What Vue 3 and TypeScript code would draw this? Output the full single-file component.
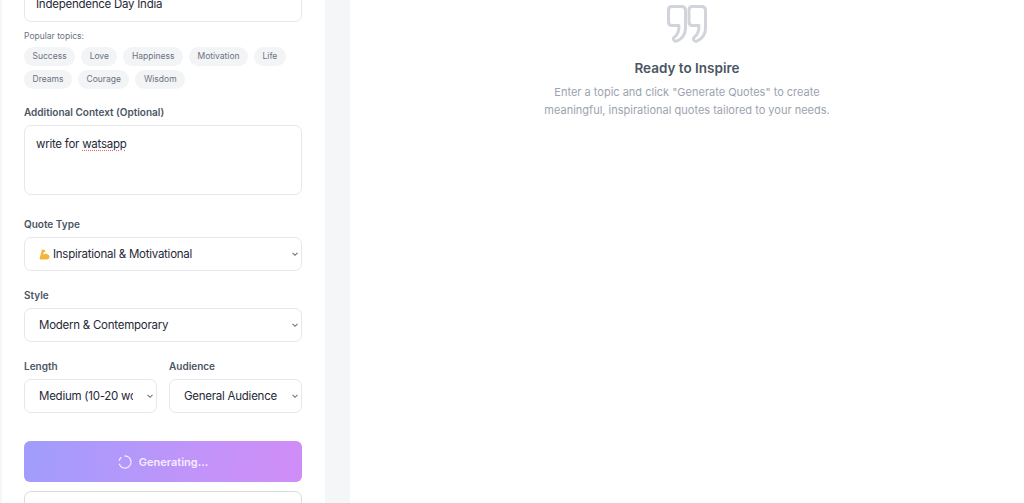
<script setup lang="ts">
const rowOne = ['Success', 'Love', 'Happiness', 'Motivation', 'Life']
const rowTwo = ['Dreams', 'Courage', 'Wisdom']
</script>

<template>
  <div class="page">
    <aside class="panel">
      <div class="form">
        <div class="input">Independence Day India</div>
        <p class="hint">Popular topics:</p>
        <div class="chips">
          <span v-for="topic in rowOne" :key="topic" class="chip">{{ topic }}</span>
        </div>
        <div class="chips second">
          <span v-for="topic in rowTwo" :key="topic" class="chip">{{ topic }}</span>
        </div>

        <label class="label context">Additional Context (Optional)</label>
        <div class="textarea">write for <span class="typo">watsapp</span></div>

        <label class="label type">Quote Type</label>
        <div class="select">
          <span class="value">
            <svg class="flex-icon" viewBox="0 0 12 12" aria-hidden="true">
              <path d="M3.200 0.500 6.500 1 7 3 5.200 3.500 4.600 6.200C6.200 4.600 9 4.600 11 6.800 12.200 9 11 11.200 9 11.500L1.500 11.500C0.500 11 0.500 10 1 9Z" fill="#f4b63a" />
            </svg>
            Inspirational &amp; Motivational
          </span>
          <svg class="chevron" viewBox="0 0 10 10" aria-hidden="true"><path d="M2.500 3.800 5 6.300 7.500 3.800" /></svg>
        </div>

        <label class="label">Style</label>
        <div class="select">
          <span class="value">Modern &amp; Contemporary</span>
          <svg class="chevron" viewBox="0 0 10 10" aria-hidden="true"><path d="M2.500 3.800 5 6.300 7.500 3.800" /></svg>
        </div>

        <div class="split">
          <div class="field">
            <label class="label">Length</label>
            <div class="select">
              <span class="value">Medium (10-20 words)</span>
              <svg class="chevron" viewBox="0 0 10 10" aria-hidden="true"><path d="M2.500 3.800 5 6.300 7.500 3.800" /></svg>
            </div>
          </div>
          <div class="field">
            <label class="label">Audience</label>
            <div class="select">
              <span class="value">General Audience</span>
              <svg class="chevron" viewBox="0 0 10 10" aria-hidden="true"><path d="M2.500 3.800 5 6.300 7.500 3.800" /></svg>
            </div>
          </div>
        </div>

        <button class="generate" type="button">
          <svg class="spinner" viewBox="0 0 14 14" aria-hidden="true">
            <path d="M7 1a6 6 0 1 1-5.600 8.200" />
            <path d="M1.200 5.400A6 6 0 0 1 3 2.600" />
          </svg>
          Generating...
        </button>
        <div class="next-box"></div>
      </div>
    </aside>

    <main class="result">
      <svg class="quote" viewBox="0 0 40 40" aria-hidden="true">
        <path d="M5 3.500H14.500Q18.500 3.500 18.500 7.500V25Q18.500 34 10 38Q8 38.800 6.800 37Q5.800 35 7.500 34Q12 31 12 22.500H5Q1.500 22.500 1.500 19V7Q1.500 3.500 5 3.500Z" />
        <path d="M25.500 3.500H34.500Q38.500 3.500 38.500 7.500V25Q38.500 34 30 38Q28 38.800 26.800 37Q25.800 35 27.500 34Q32 31 32 22.500H25.500Q22 22.500 22 19V7Q22 3.500 25.500 3.500Z" />
      </svg>
      <h2 class="title">Ready to Inspire</h2>
      <p class="lead">
        Enter a topic and click "Generate Quotes" to create<br />
        meaningful, inspirational quotes tailored to your needs.
      </p>
    </main>
  </div>
</template>

<style scoped>
.page {
  display: flex;
  height: 503px;
  overflow: hidden;
  background: #f5f6f7;
  font-family: Inter, "Liberation Sans", sans-serif;
}

.panel {
  width: 323px;
  margin-left: 2px;
  background: #fff;
  flex-shrink: 0;
  box-sizing: border-box;
  padding: 0 23px 0 22px;
}

.form {
  margin-top: -24px;
}

.input,
.textarea,
.select,
.next-box {
  box-sizing: border-box;
  background: #fff;
  border: 1px solid #e5e7eb;
  border-radius: 7px;
  color: #1f2937;
  font-size: 11.500px;
  letter-spacing: -0.25px;
}

.input {
  height: 46px;
  padding: 20px 11px 0;
  line-height: 14px;
}

.hint {
  margin: 8px 0 5px;
  font-size: 8.500px;
  line-height: 12px;
  color: #6b7280;
}

.chips {
  display: flex;
  gap: 6px;
}

.chips.second {
  margin-top: 4px;
}

.chip {
  height: 19px;
  padding: 0 8.500px;
  border-radius: 10px;
  background: #f3f4f6;
  color: #6b7280;
  font-size: 8.500px;
  line-height: 19px;
}

.label {
  display: block;
  margin: 0 0 7px;
  height: 12px;
  font-size: 10px;
  line-height: 12px;
  font-weight: 600;
  color: #4b5563;
}

.label.context {
  margin-top: 17px;
}

.label.type {
  margin-top: 23px;
}

.textarea {
  height: 70px;
  padding: 11px 11px 0;
  line-height: 14px;
}

.typo {
  text-decoration: underline dotted #e06a6a;
  text-underline-offset: 2px;
}

.select {
  display: flex;
  align-items: center;
  height: 34px;
  margin-bottom: 18px;
  padding: 0 1px 0 14px;
}

.value {
  flex: 1;
  min-width: 0;
  margin-right: 6px;
  white-space: nowrap;
  overflow: hidden;
}

.flex-icon {
  width: 11px;
  height: 11px;
  vertical-align: -2px;
}

.chevron {
  width: 10px;
  height: 10px;
  flex-shrink: 0;
  margin-left: 6px;
  fill: none;
  stroke: #6b7280;
  stroke-width: 1.100;
}

.split {
  display: grid;
  grid-template-columns: 133px 133px;
  gap: 12px;
}

.split .select {
  margin-bottom: 0;
}

.generate {
  display: flex;
  align-items: center;
  justify-content: center;
  gap: 7px;
  width: 100%;
  height: 41px;
  margin-top: 28px;
  border: 0;
  border-radius: 6px;
  background: linear-gradient(100deg, #a09dfc 0%, #c094f9 60%, #d08cf7 100%);
  color: #f5ecff;
  font-family: inherit;
  font-size: 11px;
  font-weight: 600;
}

.spinner {
  width: 14px;
  height: 14px;
  fill: none;
  stroke: #f3e9ff;
  stroke-width: 1.300;
  stroke-linecap: round;
}

.next-box {
  height: 40px;
  margin-top: 9px;
  border-color: #dcdcd8;
}

.result {
  flex: 1;
  margin-left: 25px;
  background: #fff;
  display: flex;
  flex-direction: column;
  align-items: center;
  padding-top: 3px;
  text-align: center;
}

.quote {
  width: 40px;
  height: 40px;
  fill: none;
  stroke: #d1d5db;
  stroke-width: 3;
  stroke-linejoin: round;
}

.title {
  margin: 16px 0 0;
  font-size: 13.500px;
  line-height: 18px;
  font-weight: 600;
  color: #4b5563;
}

.lead {
  margin: 6px 0 0;
  font-size: 11px;
  line-height: 18px;
  color: #9ca3af;
}
</style>
